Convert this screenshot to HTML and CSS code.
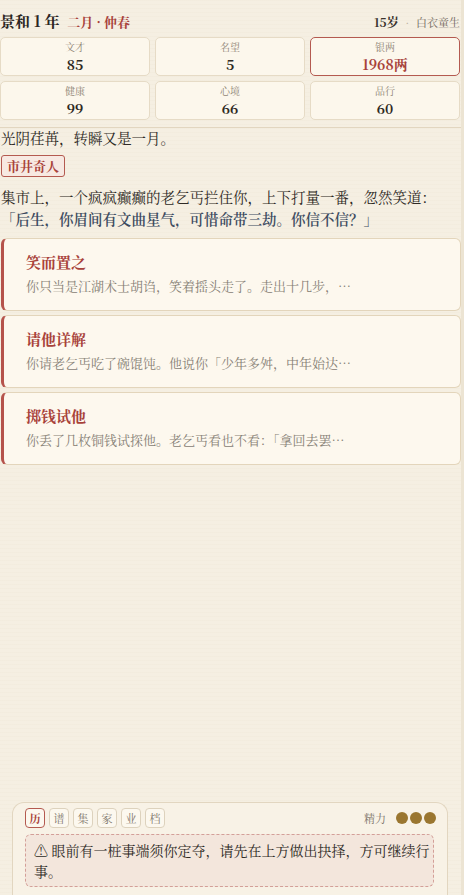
FILE: index.html
```html
<!DOCTYPE html>
<html>
<head>
  <meta charset="utf-8">
  <title>景和</title>
  <link rel="stylesheet" href="styles.css">
</head>
<body>
  <div class="app">
    <header class="top">
      <div class="title-row">
        <div class="era">景和 1 年 <span class="month">二月 · 仲春</span></div>
        <div class="who"><b>15岁</b> <span class="dot">·</span> 白衣童生</div>
      </div>
      <div class="stats">
        <div class="stat"><span class="label">文才</span><span class="value">85</span></div>
        <div class="stat"><span class="label">名望</span><span class="value">5</span></div>
        <div class="stat money"><span class="label">银两</span><span class="value">1968两</span></div>
        <div class="stat"><span class="label">健康</span><span class="value">99</span></div>
        <div class="stat"><span class="label">心境</span><span class="value">66</span></div>
        <div class="stat"><span class="label">品行</span><span class="value">60</span></div>
      </div>
    </header>

    <main class="story">
      <p class="line">光阴荏苒，转瞬又是一月。</p>
      <span class="tag">市井奇人</span>
      <p class="line">集市上，一个疯疯癫癫的老乞丐拦住你，上下打量一番，忽然笑道：<br><span class="quote">「后生，你眉间有文曲星气，可惜命带三劫。你信不信？」</span></p>

      <div class="choices">
        <button class="choice">
          <span class="choice-title">笑而置之</span>
          <span class="choice-desc">你只当是江湖术士胡诌，笑着摇头走了。走出十几步，…</span>
        </button>
        <button class="choice">
          <span class="choice-title">请他详解</span>
          <span class="choice-desc">你请老乞丐吃了碗馄饨。他说你「少年多舛，中年始达…</span>
        </button>
        <button class="choice">
          <span class="choice-title">掷钱试他</span>
          <span class="choice-desc">你丢了几枚铜钱试探他。老乞丐看也不看：「拿回去罢…</span>
        </button>
      </div>
    </main>

    <footer class="dock">
      <div class="dock-row">
        <div class="tabs">
          <span class="tab active">历</span>
          <span class="tab">谱</span>
          <span class="tab">集</span>
          <span class="tab">家</span>
          <span class="tab">业</span>
          <span class="tab">档</span>
        </div>
        <div class="energy">精力 <i></i><i></i><i></i></div>
      </div>
      <div class="notice">⚠ 眼前有一桩事端须你定夺，请先在上方做出抉择，方可继续行事。</div>
    </footer>
  </div>
</body>
</html>
```

FILE: styles.css
```css
body {
  margin: 0;
  padding: 0;
  background-color: #ece4d3;
  font-family: "Noto Serif CJK SC", "Noto Sans CJK SC", serif;
  color: #2e2a25;
}

.app {
  width: 461px;
  min-height: 895px;
  position: relative;
  background-color: #f5efe2;
  background-image: repeating-linear-gradient(180deg, rgba(160, 130, 80, 0.025) 0 1px, transparent 1px 4px);
}

.top {
  padding: 10px 1px 7px 0;
  border-bottom: 1px solid #e2d6c0;
}

.title-row {
  display: flex;
  justify-content: space-between;
  align-items: baseline;
  margin-bottom: 6px;
}

.era {
  font-size: 15px;
  font-weight: bold;
  color: #2b2622;
}

.month {
  margin-left: 4px;
  font-size: 13px;
  color: #a8423a;
}

.who {
  font-size: 11px;
  color: #6f665b;
}

.who b {
  font-size: 12px;
  color: #3a332c;
}

.who .dot {
  margin: 0 4px;
  color: #b3a895;
}

.stats {
  display: grid;
  grid-template-columns: 1fr 1fr 1fr;
  gap: 5px 5px;
}

.stat {
  box-sizing: border-box;
  display: flex;
  flex-direction: column;
  align-items: center;
  height: 39px;
  padding-top: 2px;
  background-color: #fcf7ec;
  border: 1px solid #e6dbc6;
  border-radius: 5px;
}

.stat .label {
  font-size: 10px;
  color: #8f8575;
  line-height: 14px;
}

.stat .value {
  margin-top: 1px;
  font-size: 14px;
  font-weight: bold;
  color: #2e2923;
  line-height: 19px;
}

.stat.money {
  border-color: #b45a50;
}

.stat.money .value {
  color: #a8423a;
}

.story {
  padding: 0 0 0 1px;
}

.line {
  margin: 0;
  font-size: 14.5px;
  line-height: 22px;
  color: #2e2a25;
}

.story > .line:first-child {
  line-height: 20px;
}

.tag {
  display: inline-block;
  margin: 7px 0 9px 0;
  padding: 0 5px;
  font-size: 13px;
  line-height: 20px;
  font-weight: bold;
  color: #a8423a;
  background-color: #f7e9e2;
  border: 1px solid #b45a50;
  border-radius: 3px;
}

.quote {
  font-weight: 600;
  color: #3d4b60;
}

.choices {
  display: flex;
  flex-direction: column;
  gap: 4px;
  margin-top: 8px;
}

.choice {
  display: flex;
  flex-direction: column;
  align-items: flex-start;
  height: 73px;
  padding: 11px 0 0 22px;
  background-color: #fdf8ee;
  border: 1px solid #e3d5bb;
  border-left: 3px solid #b5534b;
  border-radius: 6px;
  font-family: inherit;
  text-align: left;
  cursor: pointer;
}

.choice-title {
  font-size: 15px;
  font-weight: bold;
  color: #a8423a;
  line-height: 24px;
}

.choice-desc {
  margin-top: 2px;
  font-size: 13px;
  color: #868075;
  line-height: 20px;
}

.dock {
  position: absolute;
  left: 12px;
  right: 13px;
  bottom: 0;
  padding: 5px 13px 8px 12px;
  background-color: #f8f2e6;
  border: 1px solid #e2d6c0;
  border-bottom: none;
  border-radius: 12px 12px 0 0;
}

.dock-row {
  display: flex;
  justify-content: space-between;
  align-items: center;
  margin-bottom: 6px;
}

.tabs {
  display: flex;
  gap: 4px;
}

.tab {
  box-sizing: border-box;
  width: 20px;
  height: 20px;
  display: flex;
  justify-content: center;
  align-items: center;
  font-size: 11px;
  color: #7d756a;
  background-color: #fcf8ef;
  border: 1px solid #ddd2bd;
  border-radius: 4px;
}

.tab.active {
  color: #a8423a;
  font-weight: bold;
  border-color: #b45a50;
}

.energy {
  display: flex;
  align-items: center;
  gap: 2px;
  margin-right: -2px;
  font-size: 11px;
  color: #7d756a;
}

.energy i {
  width: 12px;
  height: 12px;
  border-radius: 50%;
  background-color: #9a7630;
}

.energy i:first-of-type {
  margin-left: 8px;
}

.notice {
  padding: 5px 2px 4px 8px;
  font-size: 14px;
  line-height: 21px;
  color: #2e2a25;
  background-color: #f3e6dc;
  border: 1px dashed #d39f98;
  border-radius: 6px;
}
```
